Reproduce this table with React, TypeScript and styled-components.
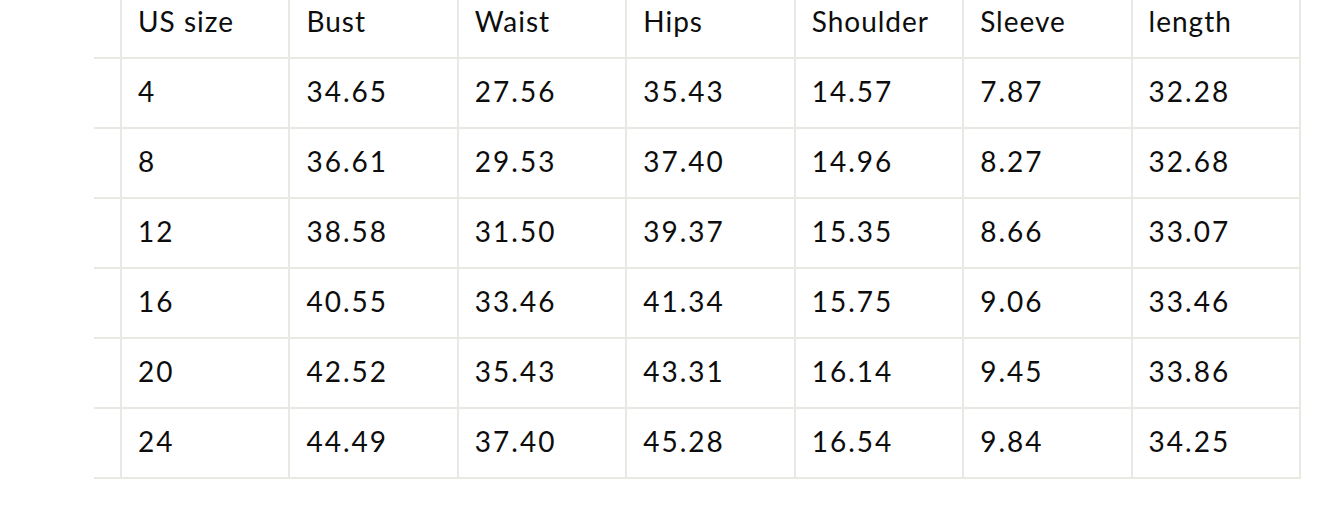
import React from "react";
import styled, { createGlobalStyle } from "styled-components";

const GlobalStyle = createGlobalStyle`
  html, body {
    margin: 0;
    padding: 0;
    background: #ffffff;
  }
  body {
    font-family: "Lato", "Liberation Sans", sans-serif;
    color: #111111;
    overflow: hidden;
  }
`;

const Page = styled.div`
  padding-left: 94px;
  margin-top: -11px;
`;

const Table = styled.div`
  width: 1207px;
  box-sizing: border-box;
  border-right: 2px solid #e9e8e2;
  display: flex;
  flex-direction: column;
`;

const Row = styled.div`
  display: grid;
  grid-template-columns: 26px repeat(7, 1fr);
  height: 70px;
  box-sizing: border-box;
  border-bottom: 2px solid #e9e8e2;
`;

const Spacer = styled.div``;

const Cell = styled.div<{ $numeric?: boolean }>`
  display: flex;
  align-items: center;
  padding-left: 16px;
  padding-bottom: 4px;
  box-sizing: border-box;
  border-left: 2px solid #e9e8e2;
  font-size: 28px;
  font-weight: 400;
  letter-spacing: ${(p) => (p.$numeric ? "2px" : "1px")};
  line-height: 1;
  color: #0d0d0d;
  white-space: nowrap;
`;

const headers = ["US size", "Bust", "Waist", "Hips", "Shoulder", "Sleeve", "length"];

const rows = [
  ["4", "34.65", "27.56", "35.43", "14.57", "7.87", "32.28"],
  ["8", "36.61", "29.53", "37.40", "14.96", "8.27", "32.68"],
  ["12", "38.58", "31.50", "39.37", "15.35", "8.66", "33.07"],
  ["16", "40.55", "33.46", "41.34", "15.75", "9.06", "33.46"],
  ["20", "42.52", "35.43", "43.31", "16.14", "9.45", "33.86"],
  ["24", "44.49", "37.40", "45.28", "16.54", "9.84", "34.25"],
];

export default function App() {
  return (
    <>
      <GlobalStyle />
      <Page>
        <Table>
          <Row>
            <Spacer />
            {headers.map((h) => (
              <Cell key={h}>{h}</Cell>
            ))}
          </Row>
          {rows.map((r) => (
            <Row key={r[0]}>
              <Spacer />
              {r.map((v, i) => (
                <Cell key={i} $numeric>
                  {v}
                </Cell>
              ))}
            </Row>
          ))}
        </Table>
      </Page>
    </>
  );
}
